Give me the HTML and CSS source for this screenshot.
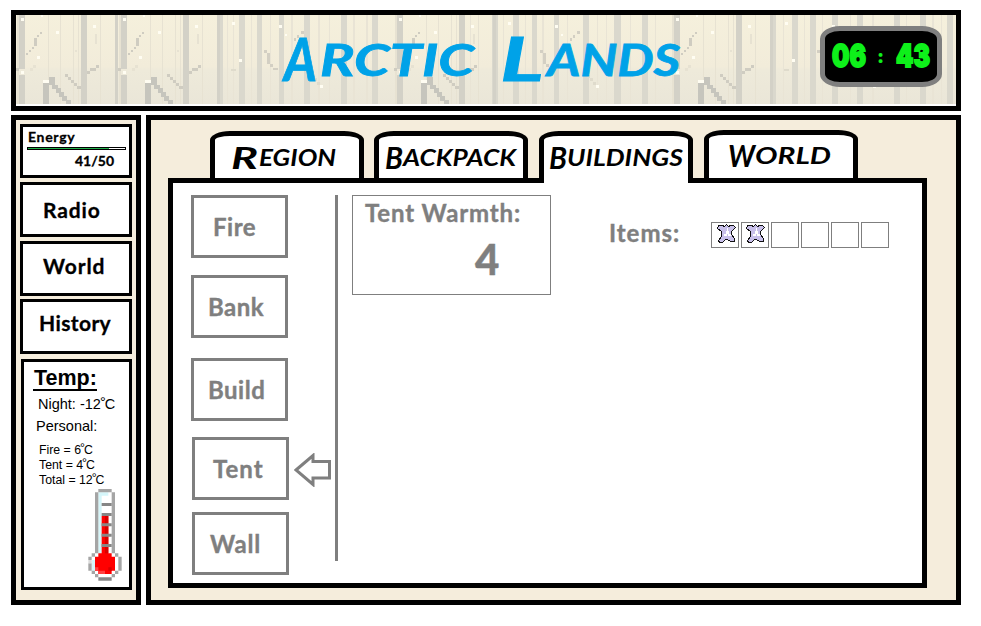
FILE: index.html
```html
<!DOCTYPE html>
<html lang="en">
<head>
<meta charset="utf-8">
<title>Arctic Lands</title>
<link rel="stylesheet" href="styles.css">
</head>
<body>
<header class="banner">
  <svg class="scene" width="940" height="89" viewBox="16 15 940 89" shape-rendering="crispEdges" aria-hidden="true">
    <defs>
      <linearGradient id="sky" x1="0" y1="0" x2="0" y2="1">
        <stop offset="0" stop-color="#f5f0dc"/><stop offset=".58" stop-color="#f2ecda"/>
        <stop offset=".62" stop-color="#eeeada"/><stop offset="1" stop-color="#eae6d8"/>
      </linearGradient>
      <g id="grove">
        <path fill="#e7e2d2" d="M32 0h1v89h-1zM44 0h1v89h-1zM57 0h1v89h-1zM62 0h1v89h-1zM84 0h1v89h-1zM1 0h2v89H1z"/>
        <path fill="#d3d1c7" d="M3 0h6v54H3zM3 60h6v29H3zM65 0h6v89h-6zM99 0h3v89h-3z"/>
        <path fill="#cfccc1" d="M10 38h2v2h-2zM13 35h2v2h-2zM16 32h2v2h-2zM18 23h3v8h-3zM21 20h2v2h-2zM24 17h2v2h-2zM49 59h3v3h-3zM52 62h3v3h-3zM55 65h3v3h-3zM58 68h3v3h-3zM61 71h4v3h-4zM71 56h3v3h-3zM74 53h6v3h-6zM80 50h3v3h-3zM0 53h3v3H0z"/>
        <path fill="#c6c5bd" d="M27 68h6v21h-6zM33 62h6v8h-6zM36 70h6v4h-6zM40 73h5v5h-5zM43 77h5v5h-5zM46 81h5v5h-5zM50 85h5v4h-5z"/>
        <path fill="#fffdf2" d="M27 65h6v3h-6zM5 3h3v3H5zM25 0h2v2h-2zM40 16h3v3h-3zM21 41h3v3h-3zM5 56h3v3H5zM77 10h3v3h-3z"/>
        <path fill="#e7e2d2" d="M17 50h3v3h-3zM14 53h3v3h-3zM79 19h2v10h-2zM59 35h2v2h-2z"/>
      </g>
      <g id="twigs">
        <path fill="#d3cfc3" d="M0 35h3v3H0zM3 38h3v11H3zM6 49h3v3H6zM9 53h5v2H9zM30 23h2v3h-2zM33 20h2v3h-2zM37 16h3v3h-3z"/>
        <path fill="#dfdbcc" d="M44 57h3v3h-3zM47 60h3v3h-3zM50 63h3v3h-3zM53 67h3v3h-3zM-33 54h5v2h-5z"/>
        <path fill="#fffdf2" d="M15 10h3v3h-3zM21 19h2v2h-2zM-25 44h3v3h-3zM56 70h3v3h-3zM-32 7h3v3h-3z"/>
      </g>
    </defs>
    <path fill="url(#sky)" d="M16 15h940v89H16z"/>
    <path fill="#e9e4d5" d="M227 15h1v89h-1zM233 15h1v89h-1zM251 15h1v89h-1zM270 15h1v89h-1zM291 15h2v89h-2zM318 15h2v89h-2zM329 15h1v89h-1zM353 15h2v89h-2zM366 15h2v89h-2zM470 15h1v89h-1zM503 15h1v89h-1zM525 15h1v89h-1zM542 15h2v89h-2zM567 15h1v89h-1zM597 15h1v89h-1zM606 15h1v89h-1zM630 15h1v89h-1zM655 15h1v89h-1zM783 15h1v89h-1zM804 15h1v89h-1zM822 15h1v89h-1zM850 15h1v89h-1zM872 15h2v89h-2zM906 15h1v89h-1zM932 15h2v89h-2zM941 15h1v89h-1z"/>
    <path fill="#dad8cd" d="M217 15h6v89h-6zM239 15h6v89h-6zM257 15h5v89h-5zM279 15h5v89h-5zM304 15h6v89h-6zM341 15h6v89h-6zM372 15h6v89h-6zM492 15h6v89h-6zM513 15h6v89h-6zM532 15h5v89h-5zM554 15h5v89h-5zM583 15h6v89h-6zM614 15h7v89h-7zM642 15h6v89h-6zM770 15h6v89h-6zM792 15h6v89h-6zM810 15h6v89h-6zM832 15h6v89h-6zM857 15h6v89h-6zM894 15h6v89h-6zM920 15h6v89h-6zM947 15h6v89h-6z"/>
    <use href="#grove" x="16" y="15"/><use href="#grove" x="118" y="15"/><use href="#grove" x="394" y="15"/><use href="#grove" x="671" y="15"/>
    <use href="#twigs" x="264" y="15"/><use href="#twigs" x="540" y="15"/><use href="#twigs" x="817" y="15"/>
  </svg>
  <h1 class="logo">
    <svg width="420" height="85" viewBox="275 17 420 85">
      <g class="brush">
        <text x="284" y="81" font-size="59" textLength="33" lengthAdjust="spacingAndGlyphs">A</text>
        <text x="320" y="76" font-size="44" textLength="154" lengthAdjust="spacingAndGlyphs">RCTIC</text>
        <text x="500" y="81" font-size="61" textLength="44" lengthAdjust="spacingAndGlyphs">L</text>
        <text x="547" y="76" font-size="44" textLength="133" lengthAdjust="spacingAndGlyphs">ANDS</text>
      </g>
    </svg>
  </h1>
  <div class="clock">
    <svg width="112" height="51" viewBox="825 31 112 51">
      <g class="digits">
        <text x="832" y="67" textLength="34" lengthAdjust="spacingAndGlyphs">06</text>
        <text class="colon" x="877" y="63">:</text>
        <text x="896" y="67" textLength="34" lengthAdjust="spacingAndGlyphs">43</text>
      </g>
    </svg>
  </div>
</header>
<div class="columns">
  <aside class="sidebar">
    <section class="box energy">
      <div class="energy-name">Energy</div>
      <div class="bar"><div class="bar-fill" style="width:84%"></div></div>
      <div class="energy-value">41/50</div>
    </section>
    <a class="box link radio">Radio</a>
    <a class="box link world">World</a>
    <a class="box link history">History</a>
    <section class="box temp">
      <h2>Temp:</h2>
      <p class="night">Night: -12<span class="deg">°</span>C</p>
      <p class="personal">Personal:</p>
      <ul>
        <li>Fire = 6<span class="deg">°</span>C</li>
        <li>Tent = 4<span class="deg">°</span>C</li>
        <li>Total = 12<span class="deg">°</span>C</li>
      </ul>
      <svg class="thermo" width="34" height="92" viewBox="24 15 102 276" aria-hidden="true">
        <path fill="#fff" d="M55 25h40v183H55zM35 218h80v42H35zM45 208h60v62H45z"/>
        <path fill="#d5f6fa" d="M55 25h10v183H55zM65 25h20v10H65zM35 228h10v32H35zM45 218h10v10H45z"/>
        <path fill="#a5a5a5" d="M55 15h40v10H55zM45 25h10v183H45zM95 25h10v183H95zM35 208h10v10H35zM105 208h10v10h-10zM25 218h10v10H25zM25 238h10v22H25zM115 218h10v42h-10zM35 260h10v10H35zM105 260h10v10h-10zM45 270h10v10H45zM95 270h10v10H95z"/>
        <path fill="#dadada" d="M25 228h10v10H25z"/>
        <path fill="#f00" d="M65 96h20v112H65zM55 208h40v10H55zM45 218h60v42H45zM55 260h40v10H55z"/>
        <path fill="#d80000" d="M75 96h10v112H75zM85 250h10v10H85z"/>
        <path fill="#ff4040" d="M45 250h10v10H45zM55 260h20v10H55z"/>
        <path fill="#868686" d="M65 57h30v9H65zM65 87h30v9H65zM65 118h30v9H65zM65 149h30v9H65zM65 180h30v9H65zM55 280h40v10H55z"/>
      </svg>
    </section>
  </aside>
  <main class="main">
    <nav class="tabs">
      <a class="tab"><svg width="144" height="42" viewBox="215 136 144 42"><g class="brush ink">
        <text x="231" y="169" font-size="31" textLength="27" lengthAdjust="spacingAndGlyphs">R</text>
        <text x="259" y="166" font-size="23" textLength="77" lengthAdjust="spacingAndGlyphs">EGION</text></g></svg></a>
      <a class="tab"><svg width="144" height="42" viewBox="379 136 144 42"><g class="brush ink">
        <text x="385" y="169" font-size="31" textLength="18" lengthAdjust="spacingAndGlyphs">B</text>
        <text x="403" y="166" font-size="23" textLength="113" lengthAdjust="spacingAndGlyphs">ACKPACK</text></g></svg></a>
      <a class="tab active"><svg width="144" height="42" viewBox="544 136 144 42"><g class="brush ink">
        <text x="549" y="169" font-size="31" textLength="18" lengthAdjust="spacingAndGlyphs">B</text>
        <text x="567" y="166" font-size="23" textLength="116" lengthAdjust="spacingAndGlyphs">UILDINGS</text></g></svg></a>
      <a class="tab raised"><svg width="144" height="42" viewBox="709 135 144 42"><g class="brush ink">
        <text x="728" y="167" font-size="31" textLength="27" lengthAdjust="spacingAndGlyphs">W</text>
        <text x="755" y="164" font-size="23" textLength="76" lengthAdjust="spacingAndGlyphs">ORLD</text></g></svg></a>
    </nav>
    <div class="panel">
      <div class="menu">
        <a class="btn fire">Fire</a>
        <a class="btn bank">Bank</a>
        <a class="btn build">Build</a>
        <a class="btn tent">Tent</a>
        <a class="btn wall">Wall</a>
      </div>
      <svg class="arrow" width="38" height="34" viewBox="0 0 38 34" aria-hidden="true">
        <path d="M2 17 19 2.500V8.500H35.500V25H19V31.500Z" fill="#fff" stroke="#7f7f7f" stroke-width="3"/>
      </svg>
      <div class="divider"></div>
      <section class="warmth">
        <div class="warmth-name">Tent Warmth:</div>
        <div class="warmth-value">4</div>
      </section>
      <section class="items">
        <span class="items-name">Items:</span>
        <svg width="0" height="0" aria-hidden="true"><defs><g id="hide">
          <path d="M1.500 1.500H5.500L7.500 2.500 9.500.5 11.500 2.500 13.500 1.500H16.500L18.500 3.500 14.500 7.500V10.500L17.500 14.500V17.500H13.500L10.500 15.500H8.500L5.500 18.500H2.500L1.500 16.500 4.500 12.500V7.500L.5 4.500Z" fill="#c8c0ea" stroke="#111"/>
          <path d="M10 4h1v3h1v3h2v2h-3v-2h-1v2H7v-2h2V7h1z" fill="#fff"/>
        </g></defs></svg>
        <div class="slots">
          <div class="slot"><svg width="20" height="20" shape-rendering="crispEdges"><use href="#hide"/></svg></div>
          <div class="slot second"><svg width="20" height="20" shape-rendering="crispEdges"><use href="#hide"/></svg></div>
          <div class="slot"></div><div class="slot"></div><div class="slot"></div><div class="slot"></div>
        </div>
      </section>
    </div>
  </main>
</div>
</body>
</html>
```
FILE: styles.css
```css
* { box-sizing: border-box; }
body {
  margin: 0;
  padding: 10px 20px 0 11px;
  background: #fff;
  color: #000;
  font-family: Lato, "Liberation Sans", sans-serif;
  font-weight: 700;
}
svg { display: block; }
h1, h2, p, ul { margin: 0; padding: 0; }
ul { list-style: none; }

.banner {
  position: relative;
  height: 101px;
  border: 5px solid #000;
}
.logo { position: absolute; left: 259px; top: 2px; }
.brush text {
  font-family: Lato, sans-serif;
  font-style: italic;
  font-weight: 700;
  fill: #00a2e8;
  stroke: #00a2e8;
  stroke-width: .8px;
}
.brush.ink text { fill: #000; stroke: #000; stroke-width: 0; }
.clock {
  position: absolute;
  left: 804px;
  top: 11px;
  width: 122px;
  height: 61px;
  border: 5px solid #7f7f7f;
  border-radius: 20px / 13px;
  background: #000;
}
.clock svg { overflow: visible; }
.digits text {
  font-family: Inter, "Liberation Sans", sans-serif;
  font-size: 31px;
  font-weight: 900;
  fill: #0ef01a;
  stroke: #0ef01a;
  stroke-width: 1.8px;
}
.digits .colon { font-size: 19px; stroke-width: 0; }

.columns { display: flex; gap: 5px; margin-top: 4px; }
.sidebar {
  width: 130px;
  height: 490px;
  padding: 4px;
  border: 5px solid #000;
  background: #f5eddc;
}
.box {
  display: block;
  width: 112px;
  border: 3px solid #000;
  background: #fff;
}
.energy { height: 54px; padding: 3px 3px 0 4px; font-size: 14px; }
.energy-name { height: 17px; padding-left: 1px; line-height: 14px; letter-spacing: .7px; -webkit-text-stroke: .3px #000; }
.bar { width: 99px; height: 3px; border: 1px solid #000; background: #fff; }
.bar-fill { height: 1px; background: #22b14c; }
.energy-value { padding-left: 48px; line-height: 21px; -webkit-text-stroke: .3px #000; }
.link { display: flex; align-items: center; height: 55px; font-size: 21px; letter-spacing: .9px; -webkit-text-stroke: .3px #000; }
.radio { margin-top: 4px; padding-left: 20px; }
.world { margin-top: 4px; padding: 0 0 6px 20px; }
.history { margin-top: 3px; padding: 0 0 8px 16px; letter-spacing: .4px; }
.temp {
  width: 111px;
  height: 231px;
  margin: 5px 0 0 1px;
  padding: 4px 0 0 9px;
  font-family: "Liberation Sans", Arial, sans-serif;
  font-weight: 400;
}
.temp h2 {
  width: 64px;
  height: 25px;
  padding-left: 1px;
  border-bottom: 2px solid #000;
  font-size: 21.5px;
  line-height: 24px;
}
.night { padding-left: 5px; margin-top: 5px; font-size: 14.5px; line-height: 17px; }
.personal { padding-left: 3px; margin-top: 5px; font-size: 14.5px; line-height: 17px; }
.temp ul { padding-left: 6px; margin-top: 8px; font-size: 12.3px; line-height: 15px; }
.deg { position: relative; top: -2px; margin: 0 -1px; }
.thermo { margin: 1px 0 0 55px; }

.main {
  width: 815px;
  height: 490px;
  padding: 10px 0 0 17px;
  border: 5px solid #000;
  background: #f5eddc;
}
.tabs { display: flex; height: 48px; padding-left: 42px; align-items: flex-start; gap: 11px; }
.tab {
  width: 154px;
  height: 47px;
  margin-top: 1px;
  border: 5px solid #000;
  border-bottom: 0;
  border-radius: 20px 20px 0 0 / 9px 9px 0 0;
  background: #fff;
}
.tab:first-child { margin-right: -1px; }
.tab.active { position: relative; height: 52px; }
.tab.raised { height: 48px; margin-top: 0; }
.panel {
  display: flex;
  align-items: flex-start;
  width: 759px;
  height: 410px;
  padding: 12px 0 0 18px;
  border: 5px solid #000;
  background: #fff;
  color: #7f7f7f;
  -webkit-text-stroke: .4px #7f7f7f;
  letter-spacing: .5px;
}
.menu { width: 98px; }
.btn {
  display: flex;
  align-items: center;
  width: 97px;
  height: 63px;
  border: 3px solid #7f7f7f;
  font-size: 24px;
}
.fire { padding-left: 19px; }
.bank { margin-top: 17px; padding-left: 14px; }
.build { margin-top: 20px; padding-left: 14px; }
.tent { margin: 16px 0 0 1px; padding-left: 18px; letter-spacing: 1px; }
.wall { margin: 12px 0 0 1px; padding-left: 15px; letter-spacing: .8px; }
.arrow { margin: 258px 0 0 5px; }
.divider { width: 3px; height: 366px; margin-left: 3px; background: #7f7f7f; }
.warmth {
  width: 199px;
  height: 100px;
  margin-left: 14px;
  border: 1px solid #7f7f7f;
}
.warmth-name { padding-left: 12px; font-size: 24px; line-height: 33px; letter-spacing: .85px; white-space: nowrap; }
.warmth-value { padding: 5px 0 0 122px; font-size: 42px; font-weight: 900; line-height: 50px; }
.items { display: flex; align-items: flex-start; margin: 27px 0 0 58px; }
.items-name { width: 102px; font-size: 24px; line-height: 21px; letter-spacing: 1px; }
.slots { display: flex; gap: 2px; }
.slot { width: 28px; height: 26px; padding: 1px 0 0 5px; border: 1px solid #7f7f7f; }
.slot.second { padding-left: 4px; }
```
